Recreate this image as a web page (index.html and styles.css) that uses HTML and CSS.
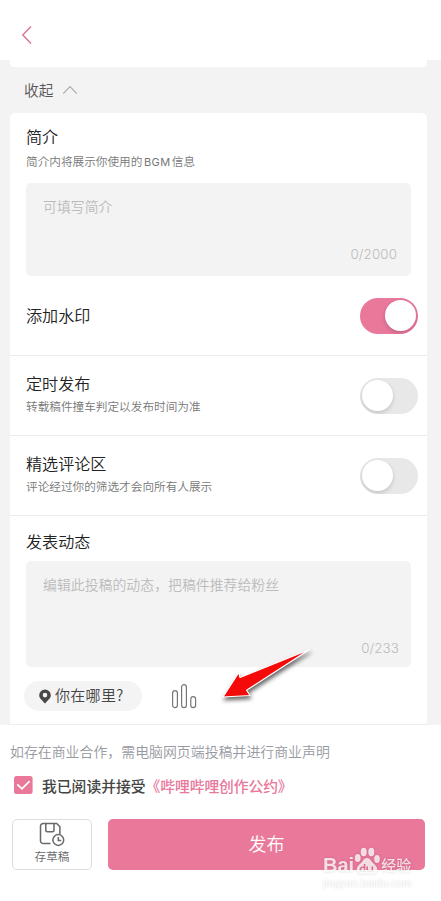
FILE: index.html
```html
<!DOCTYPE html>
<html lang="zh-CN">
<head>
<meta charset="utf-8">
<title>发布</title>
<link rel="stylesheet" href="styles.css">
</head>
<body>
<div class="app">
  <header class="topbar">
    <svg class="back" width="12" height="20" viewBox="0 0 12 20"><path d="M10 1.500 1.800 10l8.200 8.500" fill="none" stroke="#d9769a" stroke-width="1.500"/></svg>
  </header>
  <main class="content">
    <div class="card-tail"></div>
    <div class="collapse"><span>收起</span>
      <svg width="16" height="10" viewBox="0 0 16 10"><path d="M1.200 8.600 8 1.600l6.800 7" fill="none" stroke="#aaa" stroke-width="1.100"/></svg>
    </div>
    <div class="card">
      <section class="intro">
        <h2 class="title">简介</h2>
        <p class="sub">简介内将展示你使用的<span class="latin">BGM</span>信息</p>
        <div class="field field-intro"><span>可填写简介</span><span class="count">0/2000</span></div>
      </section>
      <section class="row row-mark"><h2 class="title">添加水印</h2><div class="switch on"><i></i></div></section>
      <section class="row">
        <div><h2 class="title">定时发布</h2><p class="sub">转载稿件撞车判定以发布时间为准</p></div>
        <div class="switch"><i></i></div>
      </section>
      <section class="row">
        <div><h2 class="title">精选评论区</h2><p class="sub">评论经过你的筛选才会向所有人展示</p></div>
        <div class="switch"><i></i></div>
      </section>
      <section class="post">
        <h2 class="title">发表动态</h2>
        <div class="field field-post"><span>编辑此投稿的动态，把稿件推荐给粉丝</span><span class="count">0/233</span></div>
        <div class="tools">
          <div class="place">
            <svg width="12" height="15" viewBox="0 0 12 15"><path fill-rule="evenodd" d="M6 .5a5.700 5.700 0 0 1 5.800 5.700c0 3.200-3 5-5.800 8.300C3.200 11.200.2 9.400.2 6.200A5.700 5.700 0 0 1 6 .5zm0 3.300a2.300 2.300 0 1 0 0 4.600 2.300 2.300 0 0 0 0-4.600z" fill="#484848"/></svg>
            <span>你在哪里?</span>
          </div>
          <svg class="vote" width="26" height="26" viewBox="0 0 26 26" fill="none" stroke="#777" stroke-width="1.200"><rect x="1.600" y="7.600" width="4.800" height="17" rx="2.400"/><rect x="10.600" y="1.600" width="4.800" height="23" rx="2.400"/><rect x="19.800" y="13.600" width="4.800" height="11" rx="2.400"/></svg>
        </div>
      </section>
    </div>
  </main>
  <footer class="footer">
    <p class="notice">如存在商业合作，需电脑网页端投稿并进行商业声明</p>
    <div class="agree">
      <svg width="19" height="18" viewBox="0 0 19 18"><rect width="18.600" height="18" rx="2.500" fill="#e9789b"/><path d="m3.300 8.300 4.600 4.600 7.800-7.800" fill="none" stroke="#fff" stroke-width="1.700"/></svg>
      <span>我已阅读并接受<b>《哔哩哔哩创作公约》</b></span>
    </div>
    <div class="actions">
      <div class="draft">
        <svg width="26" height="25" viewBox="0 0 26 25" fill="none" stroke="#686868" stroke-width="1.500"><path d="M11.500 21.600H4.200A2.700 2.700 0 0 1 1.500 18.900V4.200a2.700 2.700 0 0 1 2.700-2.700h13.500l3.200 3.200v7.300M6.800 1.500v6.700a1.500 1.500 0 0 0 1.500 1.500h5.200a1.500 1.500 0 0 0 1.500-1.500V1.500"/><circle cx="19.300" cy="18" r="5.400"/><path d="M19.300 15v3.400h2.900"/></svg>
        <span>存草稿</span>
      </div>
      <div class="publish">发布</div>
    </div>
  </footer>
  <svg class="arrow" width="100" height="66" viewBox="0 0 100 66"><path d="M89.500 4.500 20 32.500 18.800 27.500 3 52l27-1.500-3.400-5.300z" fill="#f50a0a" stroke="#fff" stroke-width="1.200" stroke-linejoin="round"/></svg>
  <div class="watermark">
    <div class="brand"><span>Bai</span><svg width="26" height="29" viewBox="0 0 26 29"><g fill="currentColor"><ellipse cx="3.700" cy="11" rx="2.900" ry="4"/><ellipse cx="9.700" cy="5" rx="3" ry="4.300"/><ellipse cx="17.300" cy="5" rx="3" ry="4.300"/><ellipse cx="23" cy="12" rx="2.800" ry="4"/><path fill-rule="evenodd" d="M13 11c-3 0-4 3-6 5-2 2-5 4-4 8 1 5 7 3 10 3s9 2 10-3c1-4-2-6-4-8-2-2-3-5-6-5zm-1.600 6v8H8.600c-4 0-4-5.600 0-5.600h1.200V17zm-1.600 4H8.700c-2 0-2 2.500 0 2.500h1.100zM14 19.500v3c0 1.400 3.500 1.400 3.500 0v-3h1.700V25H15.500c-2 0-3.200-1-3.200-2.500v-3z"/></g></svg><span class="jy">经验</span></div>
    <div class="url">jingyan.baidu.com</div>
  </div>
</div>
</body>
</html>
```
FILE: styles.css
```css
* { box-sizing: border-box; }
body { margin: 0; background: #fff; font-family: "Noto Sans CJK SC", sans-serif; font-weight: 350; }
h2, p { margin: 0; font-weight: inherit; white-space: nowrap; }
svg { display: block; flex: none; }
.app { position: relative; width: 441px; height: 901px; overflow: hidden; }
.topbar { height: 60px; padding: 25px 0 0 21px; }
.content { height: 665px; background: #f3f3f3; padding: 0 14px 0 10px; }
.card-tail { height: 7px; background: #fff; border-radius: 0 0 4px 4px; }
.collapse { height: 46px; display: flex; align-items: center; gap: 9px; padding: 0 0 0 14px; color: #555; font-size: 14.7px; }
.collapse span { margin-top: -1px; }
.card { height: 612px; background: #fff; border-radius: 5px 5px 2px 2px; border-bottom: 1px solid #ececec; }
.title { font-size: 16.1px; line-height: 24px; color: #222; }
.sub { font-size: 11.65px; line-height: 18px; color: #777; }
.latin { font-family: Inter, sans-serif; font-size: 11px; letter-spacing: .5px; margin: 0 1px 0 1.5px; font-weight: 400; }
.intro { height: 163px; padding: 11px 16px 0; }
.intro .sub { margin-top: 4px; }
.field { display: flex; flex-direction: column; justify-content: space-between; background: #f3f3f3; border-radius: 5px; color: #bbb; font-size: 13.9px; line-height: 20px; padding: 13px 14px 12px 17px; }
.field-intro { height: 93px; margin-top: 12px; }
.count { font-family: Inter, sans-serif; font-size: 13.3px; align-self: flex-end; font-weight: 300; letter-spacing: .15px; }
.row { height: 80px; display: flex; justify-content: space-between; align-items: center; padding: 0 9px 0 16px; border-bottom: 1px solid #ececec; }
.row-mark .title { padding-bottom: 2px; }
.row .sub { margin-top: 2px; }
.row > div:first-child { padding-bottom: 5px; }
.switch { width: 58px; height: 36px; padding: 2px; background: #e8e8e8; border-radius: 18px; overflow: hidden; }
.switch i { display: block; width: 31px; height: 31px; border-radius: 50%; background: #fff; box-shadow: 0 2px 4px rgba(0,0,0,.16); }
.switch.on { background: #e9789b; }
.switch.on i { margin-left: 23px; }
.post { padding: 13px 16px 0; }
.field-post { height: 106px; margin-top: 8px; padding-right: 12px; padding-bottom: 9px; }
.tools { display: flex; align-items: center; margin: 14px 0 0 -2px; }
.place { width: 118px; height: 30px; display: flex; align-items: center; gap: 4px; padding-left: 15px; border-radius: 15px; background: #f4f4f4; color: #444; font-size: 15px; white-space: nowrap; }
.place span { margin-top: -3px; letter-spacing: .3px; }
.vote { margin-left: 29px; }
.footer { height: 176px; padding: 15px 16px 0 10px; }
.notice { color: #9799a0; font-size: 13.92px; line-height: 22px; }
.agree { display: flex; align-items: center; gap: 9px; margin: 12px 0 0 4px; height: 22px; color: #444; font-size: 14.8px; font-weight: 500; white-space: nowrap; }
.agree b { color: #e9789b; font-weight: 500; letter-spacing: -.1px; }
.actions { display: flex; gap: 16px; margin: 23px 0 0 2px; }
.draft { width: 80px; height: 51px; border: 1px solid #dedede; border-radius: 5px; display: flex; flex-direction: column; align-items: center; color: #666; font-size: 11.6px; line-height: 17px; padding-top: 2px; }
.draft span { margin-top: 1px; }
.publish { width: 317px; height: 51px; background: #e9789b; color: #fff; border-radius: 5px; font-size: 18px; line-height: 49px; text-align: center; }
.arrow { position: absolute; left: 220px; top: 645px; filter: drop-shadow(1px 3px 2px rgba(0,0,0,.6)); }
.watermark { position: absolute; left: 323px; top: 847px; color: rgba(255,255,255,.78); filter: drop-shadow(0 0 1px rgba(0,0,0,.2)); white-space: nowrap; }
.brand { display: flex; align-items: flex-end; height: 29px; font: 700 20px/20px "Liberation Sans", sans-serif; }
.brand .jy { font: 500 15px/20px "Noto Sans CJK SC", sans-serif; margin-left: 1px; }
.brand span { padding-bottom: 1px; }
.url { font: 11px/13px "Liberation Sans", sans-serif; margin-top: 1px; }
```
